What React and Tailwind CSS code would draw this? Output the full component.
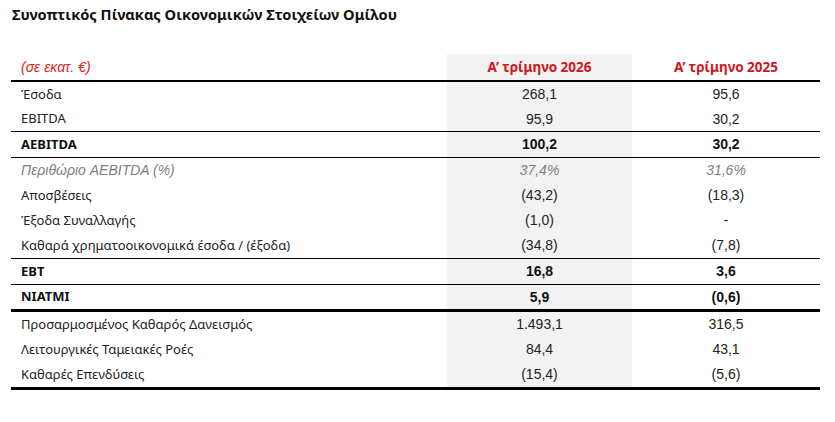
import React from "react";

const rows = [
  { label: "Έσοδα", a: "268,1", b: "95,6", h: "h-[25px]" },
  { label: "EBITDA", a: "95,9", b: "30,2", h: "h-[25px] border-b border-black" },
  { label: "AEBITDA", a: "100,2", b: "30,2", bold: true, h: "h-[26px] border-b border-black" },
  { label: "Περιθώριο AEBITDA (%)", a: "37,4%", b: "31,6%", italic: true, h: "h-[25px]" },
  { label: "Αποσβέσεις", a: "(43,2)", b: "(18,3)", h: "h-[25px]" },
  { label: "Έξοδα Συναλλαγής", a: "(1,0)", b: "-", h: "h-[25px]" },
  { label: "Καθαρά χρηματοοικονομικά έσοδα / (έξοδα)", a: "(34,8)", b: "(7,8)", h: "h-[26px] border-b border-black" },
  { label: "EBT", a: "16,8", b: "3,6", bold: true, h: "h-[26px] border-b border-black" },
  { label: "NIATMI", a: "5,9", b: "(0,6)", bold: true, h: "h-[27px] border-b-[3px] border-black" },
  { label: "Προσαρμοσμένος Καθαρός Δανεισμός", a: "1.493,1", b: "316,5", h: "h-[25px]" },
  { label: "Λειτουργικές Ταμειακές Ροές", a: "84,4", b: "43,1", h: "h-[25px]" },
  { label: "Καθαρές Επενδύσεις", a: "(15,4)", b: "(5,6)", h: "h-[28px] border-b-[3px] border-black" },
];

export default function App() {
  return (
    <div className="w-[835px] h-[422px] bg-white font-['Noto_Sans','Liberation_Sans',sans-serif] text-[#222]">
      <h1 className="pl-[12px] pt-[4px] text-[14.6px] font-bold leading-[20px] text-[#111]">
        Συνοπτικός Πίνακας Οικονομικών Στοιχείων Ομίλου
      </h1>

      <div className="ml-[11px] mt-[30px] w-[809px]">
        {/* Header */}
        <div className="grid grid-cols-[436px_185px_188px] h-[28px] border-b-2 border-black text-[13.5px]">
          <div className="flex items-center pl-[10px] italic font-['Liberation_Sans',Arial,sans-serif] text-[14px] text-[#e0201b]">(σε εκατ. €)</div>
          <div className="flex items-center justify-center bg-[#f2f2f2] font-bold text-[#d0161c]">Α’ τρίμηνο 2026</div>
          <div className="flex items-center justify-center font-bold text-[#d0161c]">Α’ τρίμηνο 2025</div>
        </div>

        {rows.map((r, i) => (
          <div
            key={i}
            className={`grid grid-cols-[436px_185px_188px] text-[13px] ${r.h} ${r.bold ? "font-bold text-[#111]" : ""} ${r.italic ? "italic text-[#7f7f7f]" : ""}`}
          >
            <div className={`flex items-center pl-[10px] ${r.italic ? "font-['Liberation_Sans',Arial,sans-serif] text-[14px]" : ""}`}>{r.label}</div>
            <div className="flex items-center justify-center bg-[#f2f2f2] font-['Liberation_Sans',Arial,sans-serif] text-[14px]">{r.a}</div>
            <div className="flex items-center justify-center font-['Liberation_Sans',Arial,sans-serif] text-[14px]">{r.b}</div>
          </div>
        ))}
      </div>
    </div>
  );
}
